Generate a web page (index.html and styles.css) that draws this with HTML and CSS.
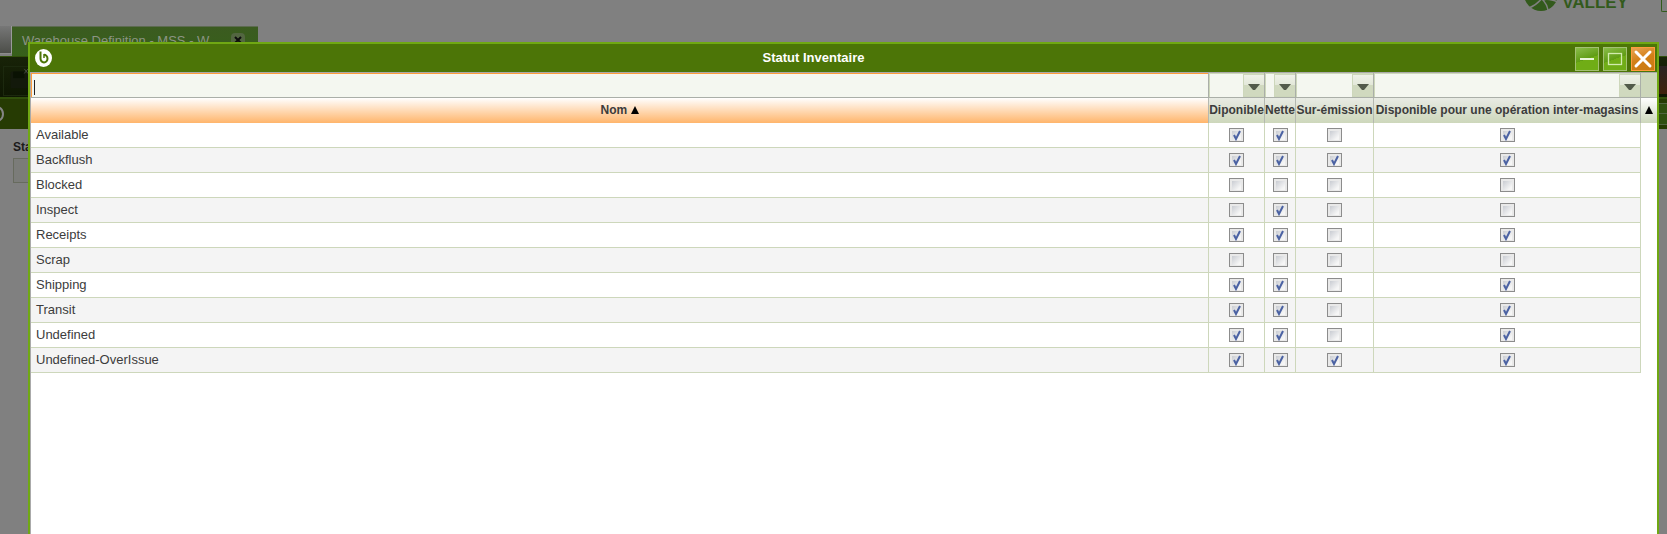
FILE: index.html
```
<!DOCTYPE html>
<html lang="fr">
<head>
    <meta charset="UTF-8">
    <meta name="viewport" content="width=device-width, initial-scale=1.0">
    <title>Statut Inventaire</title>
    <link rel="stylesheet" href="styles.css">
</head>
<body>
    <!-- Page behind the dialog -->
    <div class="page">
        <header class="banner">
            <svg class="banner-mark" viewBox="0 0 34 12" aria-hidden="true">
                <circle cx="17" cy="-6" r="17" fill="#335a1c"/>
                <path d="M5 8 Q13 5 19 -3 M18 -1 Q23 4 24 10 M19 0 Q24 -2 34 2" fill="none" stroke="#808080" stroke-width="1.5"/>
            </svg>
            <span class="banner-name">VALLEY</span>
            <span class="banner-box"></span>
        </header>
        <div class="tabs">
            <div class="tab-stub"></div>
            <div class="tab">
                <span class="tab-title">Warehouse Definition - MSS - W...</span>
                <button class="tab-close" type="button" aria-label="Fermer l'onglet">
                    <svg viewBox="0 0 14 14"><path d="M4 4 L10 10 M10 4 L4 10" stroke="#0c0c0c" stroke-width="2"/></svg>
                </button>
            </div>
        </div>
        <div class="toolbar">
            <button class="save" type="button" aria-label="Enregistrer">
                <svg viewBox="0 0 26 30"><rect x="7" y="5" width="20" height="18" rx="2" fill="#13190b"/><path d="M10 5h12v7H10z" fill="#0a1203"/><path d="M22 2l4 5M26 2l-4 5" stroke="#4b5145"/></svg>
            </button>
            <span class="toolbar-end"></span>
        </div>
        <div class="subtitle">
            <svg class="subtitle-mark" viewBox="0 0 5 18" aria-hidden="true"><path d="M-2 2 Q3 4 3 9 Q3 14 -2 16" fill="none" stroke="#858585" stroke-width="2"/></svg>
            <span class="subtitle-end"></span>
        </div>
        <div class="form">
            <label for="status">Sta</label>
            <input id="status" type="text" tabindex="-1">
        </div>
    </div>

    <!-- Dialog -->
    <div class="window" role="dialog" aria-labelledby="window-title">
        <div class="titlebar">
            <svg class="logo" viewBox="0 0 17 18" aria-hidden="true">
                <ellipse cx="8.5" cy="9" rx="8.5" ry="9" fill="#fff"/>
                <path d="M5.500 2.500 V9.500 A3.500 3.800 0 1 0 9 5.800" fill="none" stroke="#4c7507" stroke-width="2"/>
                <path d="M9 5 V9" stroke="#4c7507" stroke-width="1.500"/>
            </svg>
            <h1 id="window-title">Statut Inventaire</h1>
            <div class="controls">
                <button class="control" type="button" aria-label="Réduire">
                    <svg viewBox="0 0 22 22"><path d="M4 11 H18" stroke="#e9f5d8" stroke-width="2"/></svg>
                </button>
                <button class="control" type="button" aria-label="Agrandir">
                    <svg viewBox="0 0 22 22"><rect x="4.5" y="5.5" width="13" height="11" fill="none" stroke="#d2ebae" stroke-width="1.300"/></svg>
                </button>
                <button class="control close" type="button" aria-label="Fermer">
                    <svg viewBox="0 0 22 22"><path d="M4 4 L18 18 M18 4 L4 18" stroke="#fff" stroke-width="3" stroke-linecap="round"/></svg>
                </button>
            </div>
        </div>

        <div class="content">
            <table class="grid">
                <colgroup>
                    <col>
                    <col class="col-available">
                    <col class="col-net">
                    <col class="col-over">
                    <col class="col-transfer">
                    <col class="col-end">
                </colgroup>
                <thead>
                    <tr class="filters">
                        <td><input class="filter-text" type="text" aria-label="Filtrer par nom"></td>
                        <td><select aria-label="Filtrer Diponible"><option></option></select></td>
                        <td><select aria-label="Filtrer Nette"><option></option></select></td>
                        <td><select aria-label="Filtrer Sur-émission"><option></option></select></td>
                        <td><select aria-label="Filtrer Disponible inter-magasins"><option></option></select></td>
                        <td class="corner"></td>
                    </tr>
                    <tr class="headings">
                        <th class="sorted">Nom <svg class="arrow" viewBox="0 0 8 8" aria-hidden="true"><path d="M4 0 L8 8 H0 Z"/></svg></th>
                        <th>Diponible</th>
                        <th>Nette</th>
                        <th>Sur-émission</th>
                        <th>Disponible pour une opération inter-magasins</th>
                        <th class="sort-cell"><button type="button" aria-label="Trier"><svg class="arrow" viewBox="0 0 8 8"><path d="M4 0 L8 8 H0 Z"/></svg></button></th>
                    </tr>
                </thead>
                <tbody id="rows"></tbody>
            </table>
        </div>
    </div>

    <script>
        // name, then one flag per checkbox column
        const rows = [
            ['Available', 1, 1, 0, 1],
            ['Backflush', 1, 1, 1, 1],
            ['Blocked', 0, 0, 0, 0],
            ['Inspect', 0, 1, 0, 0],
            ['Receipts', 1, 1, 0, 1],
            ['Scrap', 0, 0, 0, 0],
            ['Shipping', 1, 1, 0, 1],
            ['Transit', 1, 1, 0, 1],
            ['Undefined', 1, 1, 0, 1],
            ['Undefined-OverIssue', 1, 1, 1, 1]
        ];
        const labels = ['Diponible', 'Nette', 'Sur-émission', 'Disponible inter-magasins'];

        document.getElementById('rows').innerHTML = rows.map(([name, ...flags]) => {
            const cells = flags.map((on, i) =>
                `<td class="flag"><input type="checkbox" aria-label="${name} : ${labels[i]}"${on ? ' checked' : ''}></td>`
            ).join('');
            return `<tr><td class="name">${name}</td>${cells}<td class="blank"></td></tr>`;
        }).join('');
    </script>
</body>
</html>
```

FILE: styles.css
```
* {
    box-sizing: border-box;
}
body {
    margin: 0;
    height: 100vh;
    overflow: hidden;
    background: #808080;
    font-family: "Liberation Sans", Arial, sans-serif;
    font-size: 13px;
    color: #3c3c3c;
}
button {
    padding: 0;
    border: 0;
    background: none;
}
svg {
    display: block;
}

/* Page behind the dialog */
.banner {
    display: flex;
    justify-content: flex-end;
    align-items: flex-start;
    height: 26px;
}
.banner-mark {
    width: 34px;
    height: 12px;
}
.banner-name {
    margin: -6px 33px 0 4px;
    font-size: 17px;
    line-height: 18px;
    font-weight: bold;
    color: #335a1c;
}
.banner-box {
    width: 6px;
    height: 12px;
    border: solid #335a1c;
    border-width: 0 0 1px 1px;
    border-radius: 0 0 0 2px;
}
.tabs {
    display: flex;
    height: 30px;
}
.tab-stub {
    width: 12px;
    height: 28px;
    border-right: 1px solid #9a9a9a;
    border-bottom: 1px solid #8c8c8c;
    background: linear-gradient(#777, #4c4e49);
}
.tab {
    display: flex;
    justify-content: space-between;
    width: 246px;
    padding: 6px 13px 0 10px;
    border-top: 1px solid #5d6b50;
    background: linear-gradient(#3b5b20, #37601a);
    color: #8c9484;
    line-height: 16px;
}
.tab-close {
    width: 14px;
    height: 14px;
    border-radius: 4px;
    background: #536641;
}
.toolbar {
    display: flex;
    justify-content: space-between;
    height: 43px;
    padding: 9px 0 3px 3px;
    border-top: 1px solid #31500b;
    border-bottom: 2px solid #31500b;
    background: linear-gradient(#182308, #0e1702);
}
.save {
    width: 26px;
    height: 30px;
    border: 1px solid #1c290e;
}
.toolbar-end {
    width: 10px;
    background: linear-gradient(#292322, #3f220b);
}
.subtitle {
    display: flex;
    justify-content: space-between;
    align-items: center;
    height: 30px;
    background: #263b03;
}
.subtitle-mark {
    width: 5px;
    height: 18px;
}
.subtitle-end {
    width: 10px;
    height: 22px;
    border: solid #526541;
    border-width: 1px 0;
    background: linear-gradient(#304f10 45%, #526541 45%, #526541 50%, #304f10 50%);
}
.form {
    display: flex;
    flex-direction: column;
    gap: 3px;
    padding: 11px 13px;
}
.form label {
    font-size: 12px;
    line-height: 15px;
    font-weight: bold;
    color: #1a1a1a;
}
.form input {
    width: 200px;
    height: 25px;
    border: 1px solid #676b5e;
    background: #7b7c79;
}

/* Dialog, laid over the page */
.window {
    position: absolute;
    top: 42px;
    right: 8px;
    bottom: 0;
    left: 28px;
    display: flex;
    flex-direction: column;
    border: 2px solid #70a813;
    border-bottom: 0;
    background: #fff;
}
.titlebar {
    display: flex;
    align-items: center;
    height: 29px;
    padding: 0 2px 0 5px;
    border-bottom: 1px solid #aaa;
    background: #4c7507;
}
.logo {
    width: 17px;
    height: 18px;
}
.titlebar h1 {
    flex: 1;
    margin: 0;
    font-size: 13px;
    line-height: 16px;
    text-align: center;
    color: #fff;
}
.controls {
    display: flex;
    gap: 4px;
    padding-top: 2px;
}
.control {
    width: 24px;
    height: 24px;
    border: 1px solid #a3c172;
    background: linear-gradient(160deg, #8abd4a, #5f9c13 50%, #70ad16 50%);
}
.control.close {
    border-color: #ff9c3c;
    background: linear-gradient(160deg, #e9a252, #d27f16 50%, #c97a12);
}

/* Grid */
.content {
    flex: 1;
    border-left: 1px solid #aaa;
}
.grid {
    width: 100%;
    table-layout: fixed;
    border-collapse: separate;
    border-spacing: 0;
}
.col-available { width: 56px; }
.col-net { width: 31px; }
.col-over { width: 78px; }
.col-transfer { width: 267px; }
.col-end { width: 16px; }

.grid td,
.grid th {
    height: 25px;
    padding: 0;
    border: solid #cdd7bb;
    border-width: 0 1px 1px 0;
}
.grid .filters td {
    border-color: #aaafa8;
}
.filters input,
.filters select {
    display: block;
    width: 100%;
    height: 24px;
    margin: 0;
    border: 1px solid #cdd7bb;
    border-width: 1px 0 0 1px;
    border-radius: 0;
    outline: 0;
    appearance: none;
}
.grid .filter-text {
    border-color: #ff9c3c;
    padding: 0 3px;
    /* text cursor */
    background: linear-gradient(#222, #222) 2px 6px / 1px 15px no-repeat #f4f7f0;
}
.filters select {
    background:
        url("data:image/svg+xml,%3Csvg xmlns='http://www.w3.org/2000/svg' width='20' height='22' viewBox='0 0 20 22'%3E%3Cpath d='M4 9h12l-5 6h-2z' fill='%23525a4a'/%3E%3C/svg%3E") right center / 20px 22px no-repeat,
        linear-gradient(#eef1e8, #e2e7d8 50%, #d0d9bf 50%) right center / 20px 21px no-repeat,
        linear-gradient(#cdd7bb, #cdd7bb) right center / 21px 100% no-repeat,
        #f4f7f0;
}
.grid .corner {
    border-right: 0;
    background: #cdd7bb;
}
.grid .headings th {
    padding-bottom: 2px;
    border-bottom: 0;
    border-color: #b4b8b0;
    background: linear-gradient(#e8ebe4, #cdd7bb);
    font-size: 12px;
    line-height: 14px;
    white-space: nowrap;
}
.grid .headings .sorted {
    background: linear-gradient(#fff, #ffb56b);
}
.arrow {
    display: inline-block;
    width: 8px;
    height: 8px;
    fill: #000;
}
.grid .headings .sort-cell {
    border-right: 0;
    background: linear-gradient(#fff, #cdd7bb);
}
tbody tr:nth-child(even) td {
    background: #f4f4f4;
}
.grid .name {
    padding-left: 5px;
    line-height: 16px;
}
.flag input {
    display: block;
    width: 15px;
    height: 14px;
    margin: 0 auto;
    border: 1px solid #8c8c8c;
    appearance: none;
    background: linear-gradient(135deg, #c9ccd2, #f6f6f6 80%) center / 9px 9px no-repeat #e9e9e9;
}
.flag input:checked {
    background:
        url("data:image/svg+xml,%3Csvg xmlns='http://www.w3.org/2000/svg' viewBox='0 0 12 12'%3E%3Cpath d='M3 6l2 4 4-8' fill='none' stroke='%234b62a3' stroke-width='2'/%3E%3C/svg%3E") center / 12px 12px no-repeat,
        linear-gradient(135deg, #c9ccd2, #f6f6f6 80%) center / 9px 9px no-repeat #e9e9e9;
}
.grid tbody .blank {
    border: 0;
    background: #fff;
}
```
